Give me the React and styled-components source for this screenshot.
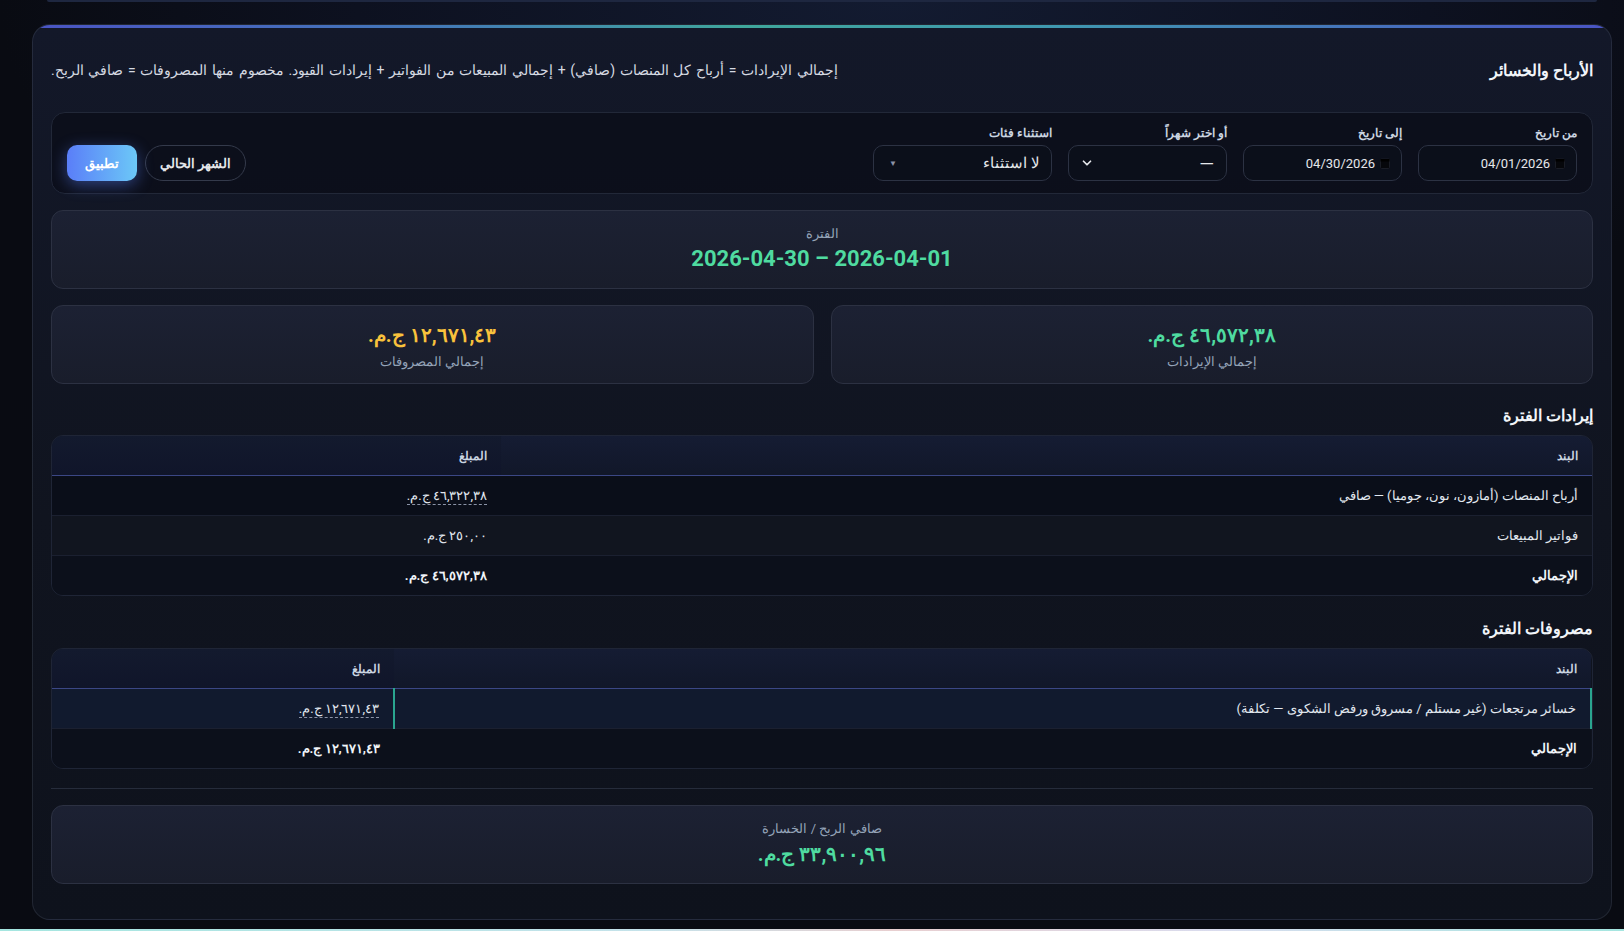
import React from 'react';
import styled, { createGlobalStyle } from 'styled-components';
import { ChevronDown } from 'lucide-react';

const GlobalStyle = createGlobalStyle`
  html, body {
    margin: 0;
    padding: 0;
  }
  body {
    background-color: #0a0d16;
    background-image: radial-gradient(ellipse 55% 45% at 55% 0%, #131b31 0%, #0d1120 60%, #090b12 100%);
    font-family: Roboto, sans-serif;
    color: #e2e8f0;
  }
`;

const Page = styled.div`
  direction: rtl;
  padding: 0 12px 0 32px;
  min-height: 931px;
  box-sizing: border-box;
`;

const TopStub = styled.div`
  height: 2px;
  margin: 0 15px;
  background: #1e2740;
  border-radius: 0 0 14px 14px;
`;

const Card = styled.section`
  position: relative;
  margin-top: 22px;
  padding: 33px 18px 35px;
  border: 1px solid rgba(148, 163, 184, 0.14);
  border-radius: 18px;
  background: linear-gradient(180deg, #131829 0%, #10141f 55%, #0e121c 100%);
  overflow: hidden;

  &::before {
    content: '';
    position: absolute;
    top: 0;
    left: 0;
    right: 0;
    height: 3px;
    background: linear-gradient(90deg, #4a54c4 0%, #4378b8 25%, #3fa79c 45%, #3f98b0 65%, #4a54c4 100%);
  }
`;

const Header = styled.header`
  display: flex;
  align-items: center;
  justify-content: space-between;
  gap: 24px;
  height: 24px;
`;

const Title = styled.h2`
  margin: 0;
  font-size: 16px;
  font-weight: 700;
  color: #f1f5f9;
`;

const Subtitle = styled.p`
  margin: 0;
  font-size: 14px;
  word-spacing: 1.2px;
  color: #d6dae2;
`;

const FilterPanel = styled.div`
  margin-top: 30px;
  display: flex;
  align-items: flex-end;
  justify-content: space-between;
  padding: 13px 15px 12px;
  background: rgba(7, 10, 18, 0.55);
  border: 1px solid #222838;
  border-radius: 14px;
`;

const Fields = styled.div`
  display: flex;
  align-items: flex-end;
  gap: 16px;
`;

const Field = styled.label`
  display: flex;
  flex-direction: column;
  gap: 4px;
  width: ${(p) => p.$w}px;
`;

const FieldLabel = styled.span`
  font-size: 11.5px;
  font-weight: 700;
  line-height: 15px;
  color: #cbd5e1;
`;

const Box = styled.div`
  height: 36px;
  box-sizing: border-box;
  display: flex;
  align-items: center;
  justify-content: ${(p) => (p.$spread ? 'space-between' : 'flex-start')};
  gap: 5px;
  padding: 0 11px;
  border: 1px solid #2c3243;
  border-radius: 10px;
  background: #0b0f1a;
  font-size: ${(p) => (p.$big ? '15px' : '13px')};
  color: #e5e7eb;
`;

const DateText = styled.span`
  direction: ltr;
`;

const Dash = styled.span`
  font-size: 19px;
  margin-right: 1px;
`;

const TinyArrow = styled.span`
  font-size: 8px;
  color: #8b93a7;
  margin-left: 4px;
`;

const Buttons = styled.div`
  display: flex;
  gap: 8px;
`;

const GhostButton = styled.button`
  height: 36px;
  padding: 0 14px;
  border: 1px solid #343a4b;
  border-radius: 18px;
  background: transparent;
  color: #e5e7eb;
  font-family: inherit;
  font-size: 13px;
  font-weight: 700;
`;

const PrimaryButton = styled.button`
  height: 36px;
  width: 70px;
  border: none;
  border-radius: 10px;
  background: linear-gradient(90deg, #5a7ef8 0%, #6cc8f7 100%);
  box-shadow: 0 4px 16px rgba(88, 128, 250, 0.45);
  color: #fff;
  font-family: inherit;
  font-size: 13px;
  font-weight: 700;
`;

const InfoCard = styled.div`
  padding: ${(p) => (p.$reverse ? '15px 14px 12px' : '14px 14px 15px')};
  display: flex;
  flex-direction: ${(p) => (p.$reverse ? 'column-reverse' : 'column')};
  align-items: center;
  gap: ${(p) => (p.$reverse ? '4px' : '2px')};
  background: linear-gradient(180deg, #1c2133 0%, #191d2b 100%);
  border: 1px solid #2c3142;
  border-radius: 12px;
`;

const PeriodCard = styled(InfoCard)`
  margin-top: 16px;
`;

const CardLabel = styled.div`
  font-size: 13px;
  line-height: 18px;
  color: #94a3b8;
`;

const BigValue = styled.div`
  font-size: ${(p) => (p.$small ? '20px' : '22px')};
  font-weight: 700;
  line-height: 28px;
  color: ${(p) => p.$color};
`;

const StatsRow = styled.div`
  margin-top: 16px;
  display: grid;
  grid-template-columns: 1fr 1fr;
  gap: 17px;
`;

const SectionTitle = styled.h3`
  margin: ${(p) => (p.$loose ? '22px' : '21px')} 0 8px;
  font-size: 16px;
  font-weight: 700;
  line-height: 22px;
  color: #f1f5f9;
`;

const TableWrap = styled.div`
  border: 1px solid #1f2536;
  border-radius: 12px;
  overflow: hidden;
`;

const Table = styled.table`
  width: 100%;
  border-collapse: collapse;
`;

const Th = styled.th`
  height: 39px;
  padding: 0 14px;
  text-align: right;
  font-size: 11.5px;
  font-weight: 700;
  color: #cbd5e1;
  background: ${(p) =>
    p.$alt
      ? 'linear-gradient(180deg, #131a2e 0%, #10152a 100%)'
      : 'linear-gradient(180deg, #151c33 0%, #111729 100%)'};
  border-bottom: 1px solid #3b4785;
  width: ${(p) => (p.$w ? `${p.$w}px` : 'auto')};
`;

const rowBg = {
  dark: '#0a0e19',
  light: '#11151f',
  total: '#0c101b',
  active: '#111a2e',
};

const Tr = styled.tr`
  &:not(:last-child) td {
    border-bottom: 1px solid #1b2030;
  }
`;

const Td = styled.td`
  height: 39px;
  padding: 0 14px;
  font-size: 13px;
  color: ${(p) => (p.$tone === 'total' ? '#f1f5f9' : '#e2e8f0')};
  font-weight: ${(p) => (p.$tone === 'total' ? 700 : 400)};
  background: ${(p) => rowBg[p.$tone]};
  border-right: ${(p) => (p.$tone === 'active' ? '2px solid #2aa58f' : 'none')};
`;

const Amount = styled.span`
  border-bottom: ${(p) => (p.$dotted ? '1px dashed #8b93a7' : 'none')};
  padding-bottom: 1px;
`;

const Divider = styled.hr`
  margin: 19px 0 16px;
  border: none;
  height: 1px;
  background: #262c3b;
`;

const BottomStub = styled.div`
  height: 2px;
  margin: 9px -12px 0 -32px;
  background: linear-gradient(90deg, #a5e6e0 0%, #c5e2ea 40%, #e8cfd0 55%, #d9dcee 75%, #a5e6e0 100%);
`;

const CalendarIcon = () => (
  <svg width="10" height="11" viewBox="0 0 10 11">
    <rect x="0.5" y="1" width="9" height="9.5" rx="1" fill="#06070b" stroke="#1a1d26" />
    <rect x="0.5" y="1" width="9" height="2.5" fill="#000" />
  </svg>
);

const revenueRows = [
  { item: 'أرباح المنصات (أمازون، نون، جوميا) — صافي', amount: '٤٦,٣٢٢,٣٨ ج.م.', tone: 'dark', dotted: true },
  { item: 'فواتير المبيعات', amount: '٢٥٠,٠٠ ج.م.', tone: 'light' },
  { item: 'الإجمالي', amount: '٤٦,٥٧٢,٣٨ ج.م.', tone: 'total' },
];

const expenseRows = [
  { item: 'خسائر مرتجعات (غير مستلم / مسروق ورفض الشكوى — تكلفة)', amount: '١٢,٦٧١,٤٣ ج.م.', tone: 'active', dotted: true },
  { item: 'الإجمالي', amount: '١٢,٦٧١,٤٣ ج.م.', tone: 'total' },
];

const DataTable = ({ rows, amountWidth }) => (
  <TableWrap>
    <Table>
      <thead>
        <tr>
          <Th>البند</Th>
          <Th $w={amountWidth} $alt>المبلغ</Th>
        </tr>
      </thead>
      <tbody>
        {rows.map((r) => (
          <Tr key={r.item + r.tone}>
            <Td $tone={r.tone}>{r.item}</Td>
            <Td $tone={r.tone}>
              <Amount $dotted={r.dotted}>{r.amount}</Amount>
            </Td>
          </Tr>
        ))}
      </tbody>
    </Table>
  </TableWrap>
);

const App = () => {
  return (
    <Page>
      <GlobalStyle />
      <TopStub />
      <Card>
        <Header>
          <Title>الأرباح والخسائر</Title>
          <Subtitle>
            إجمالي الإيرادات = أرباح كل المنصات (صافي) + إجمالي المبيعات من الفواتير + إيرادات القيود. مخصوم منها المصروفات = صافي الربح.
          </Subtitle>
        </Header>

        <FilterPanel>
          <Fields>
            <Field $w={159}>
              <FieldLabel>من تاريخ</FieldLabel>
              <Box>
                <CalendarIcon />
                <DateText>04/01/2026</DateText>
              </Box>
            </Field>
            <Field $w={159}>
              <FieldLabel>إلى تاريخ</FieldLabel>
              <Box>
                <CalendarIcon />
                <DateText>04/30/2026</DateText>
              </Box>
            </Field>
            <Field $w={159}>
              <FieldLabel>أو اختر شهراً</FieldLabel>
              <Box $spread>
                <Dash>—</Dash>
                <ChevronDown size={14} strokeWidth={3} color="#e5e7eb" />
              </Box>
            </Field>
            <Field $w={179}>
              <FieldLabel>استثناء فئات</FieldLabel>
              <Box $spread $big>
                <span>لا استثناء</span>
                <TinyArrow>▼</TinyArrow>
              </Box>
            </Field>
          </Fields>
          <Buttons>
            <GhostButton>الشهر الحالي</GhostButton>
            <PrimaryButton>تطبيق</PrimaryButton>
          </Buttons>
        </FilterPanel>

        <PeriodCard>
          <CardLabel>الفترة</CardLabel>
          <BigValue $color="#4fdba0">2026-04-01 – 2026-04-30</BigValue>
        </PeriodCard>

        <StatsRow>
          <InfoCard $reverse>
            <CardLabel>إجمالي الإيرادات</CardLabel>
            <BigValue $small $color="#4fdba0">٤٦,٥٧٢,٣٨ ج.م.</BigValue>
          </InfoCard>
          <InfoCard $reverse>
            <CardLabel>إجمالي المصروفات</CardLabel>
            <BigValue $small $color="#f9c23c">١٢,٦٧١,٤٣ ج.م.</BigValue>
          </InfoCard>
        </StatsRow>

        <SectionTitle>إيرادات الفترة</SectionTitle>
        <DataTable rows={revenueRows} amountWidth={421} />

        <SectionTitle $loose>مصروفات الفترة</SectionTitle>
        <DataTable rows={expenseRows} amountWidth={314} />

        <Divider />

        <InfoCard>
          <CardLabel>صافي الربح / الخسارة</CardLabel>
          <BigValue $small $color="#4fdba0">٣٣,٩٠٠,٩٦ ج.م.</BigValue>
        </InfoCard>
      </Card>
      <BottomStub />
    </Page>
  );
};

export default App;
